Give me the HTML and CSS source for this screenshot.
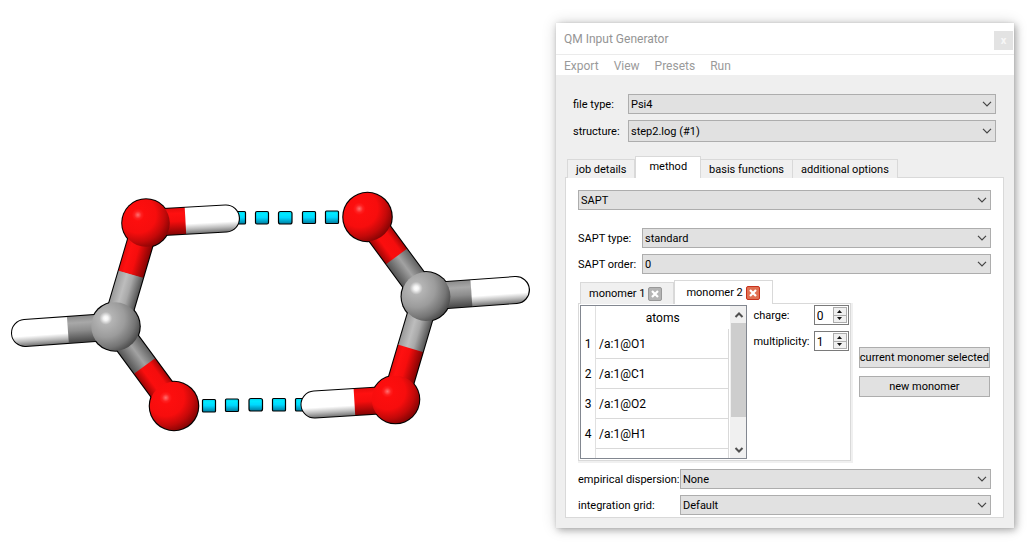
FILE: index.html
```html
<!DOCTYPE html>
<html lang="en">
<head>
<meta charset="utf-8">
<title>QM Input Generator</title>
<link rel="stylesheet" href="styles.css">
</head>
<body>
<svg class="sprites" width="0" height="0" aria-hidden="true">
  <symbol id="chevron" viewBox="0 0 10 6"><path d="M1 .8 5 4.800 9 .8" fill="none" stroke="#444" stroke-width="1.200"/></symbol>
  <symbol id="cross" viewBox="0 0 8 8"><path d="M1 1 7 7M7 1 1 7" fill="none" stroke="#fff" stroke-width="2.200"/></symbol>
  <symbol id="up" viewBox="0 0 5 3"><path d="M0 3H5L2.500 0z" fill="#111"/></symbol>
  <symbol id="down" viewBox="0 0 5 3"><path d="M0 0H5L2.500 3z" fill="#111"/></symbol>
</svg>
<main class="workspace">
  <section class="viewer" aria-label="Molecule view">
    <svg class="molecule" viewBox="0 0 556 546" role="img" aria-label="Formic acid dimer">
      <defs>
        <radialGradient id="oxygen" cx=".33" cy=".33" r=".76">
          <stop offset="0" stop-color="#ff7070"/><stop offset=".1" stop-color="#ff2020"/><stop offset=".17" stop-color="#fd0e0e"/>
          <stop offset=".5" stop-color="#f70d0d"/><stop offset=".75" stop-color="#c30909"/><stop offset="1" stop-color="#780303"/>
        </radialGradient>
        <radialGradient id="carbon" cx=".3" cy=".33" r=".78">
          <stop offset="0" stop-color="#fff"/><stop offset=".06" stop-color="#f4f4f4"/><stop offset=".17" stop-color="#b4b4b4"/>
          <stop offset=".5" stop-color="#9c9c9c"/><stop offset=".78" stop-color="#757575"/><stop offset="1" stop-color="#444"/>
        </radialGradient>
        <linearGradient id="white-bar" x2="0" y2="1">
          <stop offset="0" stop-color="#fff"/><stop offset=".62" stop-color="#fff"/><stop offset=".82" stop-color="#bdbdbd"/><stop offset="1" stop-color="#777"/>
        </linearGradient>
        <linearGradient id="red-bar" x2="0" y2="1">
          <stop offset="0" stop-color="#e80c0c"/><stop offset=".2" stop-color="#ff1010"/><stop offset=".5" stop-color="#f60d0d"/><stop offset="1" stop-color="#850404"/>
        </linearGradient>
        <linearGradient id="gray-bar" x2="0" y2="1">
          <stop offset="0" stop-color="#8c8c8c"/><stop offset=".25" stop-color="#a8a8a8"/><stop offset=".55" stop-color="#8d8d8d"/><stop offset="1" stop-color="#474747"/>
        </linearGradient>
        <linearGradient id="bright-gray-bar" x2="0" y2="1">
          <stop offset="0" stop-color="#9a9a9a"/><stop offset=".35" stop-color="#bdbdbd"/><stop offset=".6" stop-color="#a8a8a8"/><stop offset="1" stop-color="#555"/>
        </linearGradient>
        <linearGradient id="even-gray-bar" x2="0" y2="1">
          <stop offset="0" stop-color="#636363"/><stop offset=".45" stop-color="#a2a2a2"/><stop offset="1" stop-color="#555"/>
        </linearGradient>
        <linearGradient id="even-red-bar" x2="0" y2="1">
          <stop offset="0" stop-color="#a80707"/><stop offset=".25" stop-color="#f50d0d"/><stop offset=".65" stop-color="#fb0e0e"/><stop offset="1" stop-color="#a00606"/>
        </linearGradient>
        <linearGradient id="cyan-bar" x2="0" y2="1">
          <stop offset="0" stop-color="#00cfee"/><stop offset=".2" stop-color="#00eaff"/><stop offset=".5" stop-color="#00d8ff"/><stop offset="1" stop-color="#007a9c"/>
        </linearGradient>
      </defs>
      <g fill="url(#cyan-bar)" stroke="#000" stroke-width="1.200">
        <rect x="232" y="211.500" width="13.500" height="12.500" rx="1"/><rect x="255.500" y="211.500" width="13" height="12.500" rx="1.500"/>
        <rect x="278.500" y="211.500" width="13.500" height="12.500" rx="2"/><rect x="302.500" y="211.500" width="13" height="12" rx="1"/>
        <rect x="325.500" y="211" width="13" height="12.500" rx="1"/>
        <rect x="202.500" y="399.500" width="13" height="12.500" rx="1"/><rect x="225.500" y="399" width="13" height="12.500" rx="1"/>
        <rect x="249" y="398.500" width="13.500" height="12.500" rx="2"/><rect x="272.500" y="398.500" width="13" height="12.500" rx="1"/>
        <rect x="295.500" y="398.500" width="13" height="12.500" rx="1"/>
      </g>
      <g stroke="#000" stroke-linecap="round" fill="none">
        <path stroke-width="28" d="M146 223 226 218.500M314.500 404.500 395.500 399.500M25 333 115.500 326.500M426 296.500 516 290"/>
        <path stroke-width="27.500" d="M146 223 115.500 326.500 174 406M367.500 217 426 296.500 395.500 399.500"/>
      </g>
      <g>
        <circle cx="146" cy="223" r="24.800"/><circle cx="115.500" cy="326.500" r="25.300"/><circle cx="174" cy="406" r="25.300"/>
        <circle cx="367.500" cy="217" r="25.300"/><circle cx="426" cy="296.500" r="25.500"/><circle cx="395.500" cy="399.500" r="24.800"/>
      </g>
      <g transform="translate(25 333) rotate(-4.100)">
        <path d="M44-13H0a13 13 0 0 0 0 26H44z" fill="url(#white-bar)"/><path d="M43-13H91V13H43z" fill="url(#gray-bar)"/>
      </g>
      <g transform="translate(426 296.500) rotate(-4.100)">
        <path d="M0-13H46V13H0z" fill="url(#gray-bar)"/><path d="M45.500-13H90a13 13 0 0 1 0 26H45.500z" fill="url(#white-bar)"/>
      </g>
      <g transform="translate(146 223) rotate(-3.200)">
        <path d="M0-13H40V13H0z" fill="url(#red-bar)"/><path d="M39.500-13H80a13 13 0 0 1 0 26H39.500z" fill="url(#white-bar)"/>
      </g>
      <g transform="translate(314.500 404.500) rotate(-3.500)">
        <path d="M41-13H0a13 13 0 0 0 0 26H41z" fill="url(#white-bar)"/><path d="M40-13H81V13H40z" fill="url(#red-bar)"/>
      </g>
      <g transform="translate(115.500 326.500) rotate(-73.600)">
        <path d="M0-12.700H55V12.700H0z" fill="url(#bright-gray-bar)"/><path d="M54.500-12.700H108V12.700H54.500z" fill="url(#red-bar)"/>
      </g>
      <g transform="translate(395.500 399.500) rotate(-73.500)">
        <path d="M0-12.700H54V12.700H0z" fill="url(#red-bar)"/><path d="M53.300-12.700H107V12.700H53.300z" fill="url(#bright-gray-bar)"/>
      </g>
      <g transform="translate(115.500 326.500) rotate(53.650)">
        <path d="M0-12.700H50V12.700H0z" fill="url(#even-gray-bar)"/><path d="M49-12.700H98V12.700H49z" fill="url(#even-red-bar)"/>
      </g>
      <g transform="translate(367.500 217) rotate(53.650)">
        <path d="M0-12.700H50V12.700H0z" fill="url(#even-red-bar)"/><path d="M49-12.700H98V12.700H49z" fill="url(#even-gray-bar)"/>
      </g>
      <g fill="url(#oxygen)">
        <circle cx="146" cy="223" r="23.800"/><circle cx="174" cy="406" r="24.200"/><circle cx="367.500" cy="217" r="24.200"/><circle cx="395.500" cy="399.500" r="23.800"/>
      </g>
      <g fill="url(#carbon)"><circle cx="115.500" cy="326.500" r="24.200"/><circle cx="426" cy="296.500" r="24.400"/></g>
    </svg>
  </section>

  <section class="dialog" aria-labelledby="dialog-title">
    <header class="titlebar">
      <h1 class="title" id="dialog-title">QM Input Generator</h1>
      <button class="close" aria-label="Close">x</button>
    </header>
    <nav class="menubar">
      <button class="menu">Export</button><button class="menu">View</button><button class="menu">Presets</button><button class="menu">Run</button>
    </nav>
    <div class="content">
      <div class="form file-form">
        <label for="file-type">file type:</label>
        <div class="combo"><select id="file-type"><option>Psi4</option></select><svg class="arrow"><use href="#chevron"/></svg></div>
        <label for="structure">structure:</label>
        <div class="combo tall"><select id="structure"><option>step2.log (#1)</option></select><svg class="arrow"><use href="#chevron"/></svg></div>
      </div>

      <div class="tabs main-tabs" role="tablist">
        <button class="tab" role="tab">job details</button>
        <button class="tab selected" role="tab" aria-selected="true">method</button>
        <button class="tab" role="tab">basis functions</button>
        <button class="tab" role="tab">additional options</button>
      </div>
      <div class="pane">
        <div class="combo"><select aria-label="method"><option>SAPT</option></select><svg class="arrow"><use href="#chevron"/></svg></div>
        <div class="form sapt-form">
          <label for="sapt-type">SAPT type:</label>
          <div class="combo"><select id="sapt-type"><option>standard</option></select><svg class="arrow"><use href="#chevron"/></svg></div>
          <label for="sapt-order">SAPT order:</label>
          <div class="combo"><select id="sapt-order"><option>0</option></select><svg class="arrow"><use href="#chevron"/></svg></div>
        </div>

        <div class="monomers">
          <div class="monomer-tabs-area">
            <div class="tabs monomer-tabs">
              <div class="tab"><button class="tab-label">monomer 1</button><button class="tab-close" aria-label="Close monomer 1"><svg><use href="#cross"/></svg></button></div>
              <div class="tab selected"><button class="tab-label">monomer 2</button><button class="tab-close" aria-label="Close monomer 2"><svg><use href="#cross"/></svg></button></div>
            </div>
            <div class="monomer-pane">
              <div class="atom-list">
                <div class="atom-view">
                  <table class="atoms">
                    <thead><tr><th class="num"></th><th>atoms</th></tr></thead>
                    <tbody>
                      <tr><th class="num">1</th><td>/a:1@O1</td></tr>
                      <tr><th class="num">2</th><td>/a:1@C1</td></tr>
                      <tr><th class="num">3</th><td>/a:1@O2</td></tr>
                      <tr><th class="num">4</th><td>/a:1@H1</td></tr>
                      <tr><th class="num"></th><td></td></tr>
                    </tbody>
                  </table>
                </div>
                <div class="scrollbar">
                  <button class="scroll-button" aria-label="Scroll up"><svg viewBox="0 0 10 8"><path d="M1.500 6 5 2.500 8.500 6" fill="none" stroke="#505050" stroke-width="2"/></svg></button>
                  <div class="track"><div class="thumb"></div></div>
                  <button class="scroll-button" aria-label="Scroll down"><svg viewBox="0 0 10 8"><path d="M1.500 2 5 5.500 8.500 2" fill="none" stroke="#505050" stroke-width="2"/></svg></button>
                </div>
              </div>
              <div class="charges">
                <label for="charge">charge:</label>
                <div class="spin"><input id="charge" type="text" inputmode="numeric" value="0"><div class="steps"><button aria-label="Increase charge"><svg><use href="#up"/></svg></button><button aria-label="Decrease charge"><svg><use href="#down"/></svg></button></div></div>
                <label for="multiplicity">multiplicity:</label>
                <div class="spin"><input id="multiplicity" type="text" inputmode="numeric" value="1"><div class="steps"><button aria-label="Increase multiplicity"><svg><use href="#up"/></svg></button><button aria-label="Decrease multiplicity"><svg><use href="#down"/></svg></button></div></div>
              </div>
            </div>
          </div>
          <div class="actions">
            <button class="push">current monomer selected</button>
            <button class="push">new monomer</button>
          </div>
        </div>

        <div class="form grid-form">
          <label for="dispersion">empirical dispersion:</label>
          <div class="combo"><select id="dispersion"><option>None</option></select><svg class="arrow"><use href="#chevron"/></svg></div>
          <label for="grid">integration grid:</label>
          <div class="combo"><select id="grid"><option>Default</option></select><svg class="arrow"><use href="#chevron"/></svg></div>
        </div>
      </div>
    </div>
  </section>
</main>
</body>
</html>
```
FILE: styles.css
```css
* { box-sizing: border-box; }
body {
  margin: 0;
  background: #fff;
  color: #000;
  font: 11px/16px Roboto, "Liberation Sans", sans-serif;
}
button, select, input { margin: 0; padding: 0; border: 0; border-radius: 0; background: none; color: inherit; font: inherit; }
svg { display: block; }
label { padding-top: 2px; }
.sprites { position: absolute; }

.workspace {
  display: grid;
  grid-template-columns: minmax(0, 556fr) minmax(440px, 458fr);
  align-items: start;
  padding-right: 13px;
}
.molecule { width: 100%; }

.dialog {
  margin: 23px 0 18px;
  background: #efefef;
  box-shadow: 0 0 1px rgba(0, 0, 0, .1), 2px 2px 7px rgba(0, 0, 0, .28), 0 0 14px rgba(0, 0, 0, .16);
}
.titlebar {
  display: flex;
  align-items: center;
  justify-content: space-between;
  height: 32px;
  padding: 1px 1px 0 8px;
  border-bottom: 1px solid #ebebeb;
  background: #fff;
}
.title { margin: 0; color: #949494; font: 12px/16px Roboto, sans-serif; }
.close { width: 19px; height: 19px; margin-top: 3px; background: #e3e3e3; color: #f7f7f7; font-weight: 700; line-height: 16px; }
.menubar { display: flex; gap: 15px; height: 20px; padding-left: 8px; background: #fff; color: #9a9a9a; font-size: 12px; line-height: 22px; }

.content { padding: 19px 11px 10px 9px; }
.form { display: grid; align-items: center; row-gap: 6px; }
.file-form { grid-template-columns: 55px 1fr; padding: 0 7px 0 8px; }
.combo { display: grid; align-items: center; height: 20px; }
.combo.tall { height: 22px; }
.combo select {
  grid-area: 1 / 1;
  width: 100%;
  height: 100%;
  padding: 2px 20px 0 2px;
  border: 1px solid #adadad;
  background: #e1e1e1;
  appearance: none;
}
.arrow { grid-area: 1 / 1; justify-self: end; width: 10px; height: 6px; margin-right: 4px; pointer-events: none; }

.tabs { display: flex; align-items: flex-end; }
.tab { border: 1px solid #d9d9d9; border-bottom: 0; background: #f0f0f0; }
.tab + .tab { border-left: 0; }
.tab.selected { border: 1px solid #d9d9d9; border-bottom: 0; background: #fff; }
.main-tabs { margin: 14px 0 -1px; padding-left: 2px; }
.main-tabs .tab { height: 19px; padding: 1px 8px 0; }
.main-tabs .selected { height: 22px; padding: 0 13px 1px; }

.pane { margin-right: -1px; padding: 12px 12px 2px; border: 1px solid #d9d9d9; background: #fff; }
.sapt-form { grid-template-columns: 64px 1fr; margin-top: 18px; }

.monomers { display: grid; grid-template-columns: minmax(0, 272fr) minmax(130px, 132fr); align-items: center; column-gap: 8px; margin-top: 6px; }
.monomer-tabs { padding-left: 2px; margin-bottom: -1px; }
.monomer-tabs .tab { display: flex; align-items: center; gap: 3px; height: 22px; padding: 0 11px 0 8px; }
.monomer-tabs .selected { height: 24px; padding: 0 12px 0 11px; }
.tab-close { display: grid; place-items: center; width: 14px; height: 14px; border: 1px solid #999; border-radius: 2px; background: #b4b4b4; }
.selected .tab-close { border-color: #c8321c; background: #e07052; }
.tab-close svg { width: 8px; height: 8px; }
.monomer-pane {
  display: grid;
  grid-template-columns: minmax(0, 167fr) minmax(95px, 95fr);
  column-gap: 6px;
  padding: 1px;
  border: 1px solid #d9d9d9;
  box-shadow: 1px 1px 0 1px #f0f0f0;
}
.atom-list { display: flex; height: 154px; border: 1px solid #828790; }
.atom-view { flex: 1; overflow: hidden; }
.atoms { width: 100%; border-collapse: separate; border-spacing: 0; table-layout: fixed; font-size: 12px; }
.atoms th, .atoms td { height: 30px; padding: 0 0 0 3px; font-weight: 400; text-align: left; }
.atoms td { border: solid #d9d9d9; border-width: 0 1px 1px 0; }
.atoms thead th { height: 23px; padding: 0; text-align: center; }
.atoms .num, .atoms thead .num { width: 15px; padding: 0; border-right: 1px solid #e0e0e0; text-align: center; }
.scrollbar { display: flex; flex-direction: column; width: 17px; padding-left: 1px; background: #f0f0f0; border-left: 1px solid #fff; }
.scroll-button { display: grid; place-items: center; height: 17px; }
.scroll-button svg { width: 10px; height: 8px; }
.track { flex: 1; }
.thumb { height: 80%; background: #cdcdcd; }

.charges { display: grid; grid-template-columns: 1fr 35px; grid-auto-rows: 20px; align-items: center; row-gap: 6px; }
.spin { display: flex; height: 20px; padding: 1px; border: 1px solid #7a7a7a; }
.spin input { flex: 1; width: 0; padding: 1px 0 0 1px; font-size: 12px; }
.steps { display: flex; flex-direction: column; width: 14px; border: 1px solid #adadad; background: #f0f0f0; }
.steps button { display: grid; flex: 1; place-items: center; }
.steps button + button { border-top: 1px solid #adadad; }
.steps svg { width: 5px; height: 3px; }

.actions { display: grid; row-gap: 8px; padding: 2px 1px 0 0; }
.push { height: 21px; padding-top: 2px; border: 1px solid #adadad; background: #e1e1e1; white-space: nowrap; }
.grid-form { grid-template-columns: 102px 1fr; margin-top: 8px; }
```
